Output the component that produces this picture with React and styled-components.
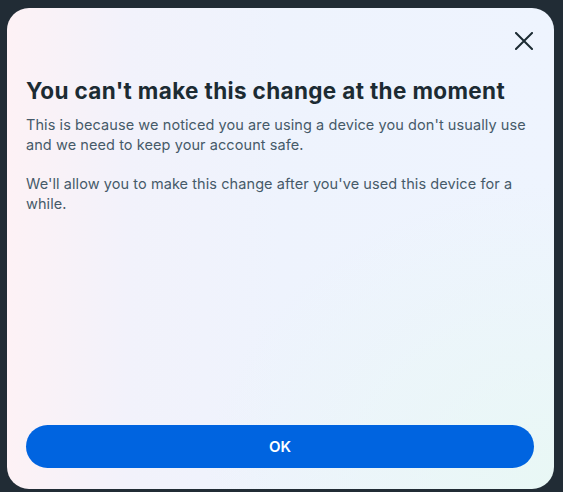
import React from "react";
import styled, { createGlobalStyle } from "styled-components";

const Global = createGlobalStyle`
  html, body { margin: 0; padding: 0; background: #212c35; }
  body { width: 563px; height: 492px; overflow: hidden; font-family: Inter, "Noto Sans", sans-serif; }
`;

const Dialog = styled.div`
  box-sizing: border-box;
  margin: 8px 0 0 7px;
  width: 547px;
  height: 481px;
  border-radius: 22px;
  padding: 20px 20px 20px 19px;
  display: flex;
  flex-direction: column;
  background:
    radial-gradient(ellipse at 100% 100%, rgba(232, 248, 244, 0.9) 0%, rgba(232, 248, 244, 0) 45%),
    linear-gradient(90deg, #fdf2f5 0%, #f2f2fb 22%, #eef3fd 50%, #eef4fe 100%);
`;

const Header = styled.div`
  display: flex;
  justify-content: flex-end;
  height: 44px;
`;

const Close = styled.button`
  border: none;
  background: transparent;
  padding: 0;
  width: 24px;
  height: 24px;
  margin: 1px -2px 0 0;
  display: flex;
  align-items: center;
  justify-content: center;
  cursor: pointer;
`;

const Title = styled.h1`
  margin: 5px 0 0 0;
  font-size: 22.5px;
  font-weight: 700;
  line-height: 28px;
  color: #1c2b33;
  letter-spacing: 0.35px;
`;

const Body = styled.p`
  margin: ${(p) => (p.$first ? "10px" : "20px")} 0 0 0;
  font-size: 14.5px;
  line-height: 19.5px;
  letter-spacing: 0.08px;
  color: #465a69;
`;

const Spacer = styled.div`
  flex: 1;
`;

const OkButton = styled.button`
  width: 508px;
  height: 43px;
  border: none;
  border-radius: 22px;
  background: #0064e0;
  color: #fff;
  font-family: Inter, "Noto Sans", sans-serif;
  font-size: 15px;
  font-weight: 600;
  cursor: pointer;
  margin-bottom: 1px;
`;

export default function App() {
  return (
    <>
      <Global />
      <Dialog>
        <Header>
          <Close aria-label="Close">
            <svg width="18" height="18" viewBox="0 0 18 18">
              <path d="M1 1 L17 17 M17 1 L1 17" stroke="#1c2b33" strokeWidth="2" strokeLinecap="square" />
            </svg>
          </Close>
        </Header>
        <Title>You can't make this change at the moment</Title>
        <Body $first>
          This is because we noticed you are using a device you don't usually use
          and we need to keep your account safe.
        </Body>
        <Body>
          We'll allow you to make this change after you've used this device for a
          while.
        </Body>
        <Spacer />
        <OkButton>OK</OkButton>
      </Dialog>
    </>
  );
}
